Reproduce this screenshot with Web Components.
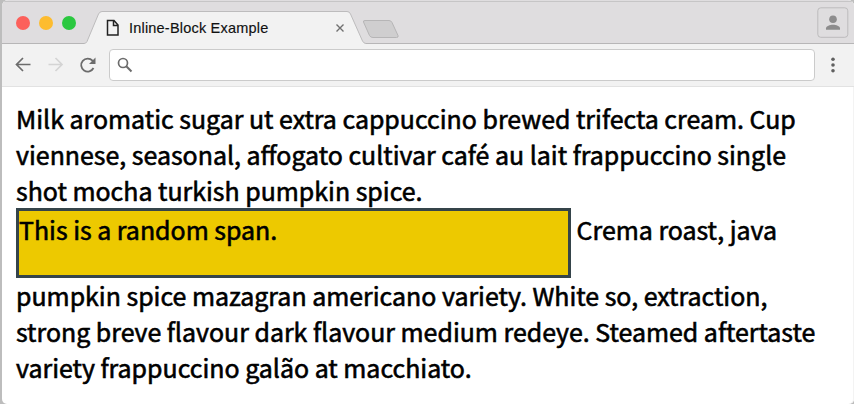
<!DOCTYPE html>
<html lang="en">
<head>
<meta charset="utf-8">
<title>Inline-Block Example</title>
<style>
body { margin: 0; background: #bdbdbd; overflow: hidden; }
</style>
</head>
<body>
<browser-window>
  <tab-strip slot="chrome"><browser-tab>Inline-Block Example</browser-tab></tab-strip>
  <tool-bar slot="chrome"></tool-bar>
  <page-text>Milk aromatic sugar ut extra cappuccino brewed trifecta cream. Cup<br>viennese, seasonal, affogato cultivar café au lait frappuccino single<br>shot mocha turkish pumpkin spice.<br><inline-box>This is a random span.</inline-box> Crema roast, java<br>pumpkin spice mazagran americano variety. White so, extraction,<br>strong breve flavour dark flavour medium redeye. Steamed aftertaste<br>variety frappuccino galão at macchiato.</page-text>
</browser-window>
<script>
function define(name, html) {
  customElements.define(name, class extends HTMLElement {
    constructor() {
      super();
      this.attachShadow({ mode: 'open' }).innerHTML = html;
    }
  });
}

define('browser-window', `
<style>
:host { display: flex; flex-direction: column; box-sizing: border-box; width: 854px; height: 404px; padding-left: 2px; }
.frame { flex: 1; display: flex; flex-direction: column; background: #fff; border-radius: 6px 6px 5px 5px; overflow: hidden; box-shadow: inset -1px 0 #f3f3f3; }
</style>
<div class="frame"><slot name="chrome"></slot><slot></slot></div>`);

define('tab-strip', `
<style>
:host { display: grid; grid-template-columns: 82px 290px 38px 1fr 31px; box-sizing: border-box; height: 44px; padding: 0 6px 0 0; background: #dfdddf linear-gradient(#c6c5c6, #c6c5c6) 0 1px / 100% 1px no-repeat; box-shadow: inset 0 -1px #b7b6b7; }
.lights { display: flex; gap: 9px; padding: 16px 0 0 14px; }
.lights i { width: 14px; height: 14px; border-radius: 50%; background: #fc605b; }
.lights i:nth-child(2) { background: #fdbc2f; }
.lights i:nth-child(3) { background: #2bc840; }
.new { margin: 19px 0 0 -14px; }
.profile { grid-column: 5; margin-top: 7px; }
svg { display: block; }
</style>
<div class="lights"><i></i><i></i><i></i></div>
<slot></slot>
<svg class="new" width="40" height="20" viewBox="0 0 40 20"><path d="M5 1.500H29Q31 1.500 32 3.500L38 16.500Q38.700 18.500 36.500 18.500H13Q10.500 18.500 9.500 16.500L3.500 3Q3 1.500 5 1.500Z" fill="#cfcecf" stroke="#b6b5b6"/></svg>
<svg class="profile" width="32" height="32" viewBox="0 0 32 32"><rect x=".8" y=".8" width="30" height="29.500" rx="3" fill="#dfdddf" stroke="#bcbbbc"/><circle cx="16" cy="12.300" r="3.800" fill="#8d8c8d"/><path d="M9 22.700V21.500C9 19 13 17.800 16 17.800S23 19 23 21.500V22.700Z" fill="#8d8c8d"/></svg>`);

define('browser-tab', `
<style>
:host { display: grid; grid-area: 1 / 2; width: 290px; height: 44px; font: 14.500px "Liberation Sans", Arial, sans-serif; letter-spacing: .2px; color: #111; }
.shape, .row { grid-area: 1 / 1; }
.row { display: flex; align-items: center; padding: 11px 0 0 22px; }
.doc { margin: 1px 9px 0 0; }
.close { margin: 1px 0 0 66px; }
.label { white-space: nowrap; width: 140px; -webkit-text-stroke: .15px; }
</style>
<svg class="shape" width="290" height="44" viewBox="0 0 290 44"><path d="M0 43.500Q2 43.500 3 41.500L14.500 14Q15.800 11.500 18 11.500H263Q265.500 11.500 266.500 14L278.500 41Q279.800 43.500 282 43.500V44H0Z" fill="#f2f2f2"/><path d="M0 43.500Q2 43.500 3 41.500L14.500 14Q15.800 11.500 18 11.500H263Q265.500 11.500 266.500 14L278.500 41Q279.800 43.500 282 43.500" fill="none" stroke="#bdbcbd"/></svg>
<div class="row">
<svg class="doc" width="14" height="18" viewBox="0 0 14 18"><path d="M1.500 1.500H8L12 6V16H1.500ZM7.500 1.500V6.500H12" fill="none" stroke="#222" stroke-width="1.500"/></svg>
<span class="label"><slot></slot></span>
<svg class="close" width="10" height="10" viewBox="0 0 10 10"><path d="M1.500 1.500L8.500 8.500M8.500 1.500L1.500 8.500" stroke="#707070" stroke-width="1.400"/></svg>
</div>`);

define('tool-bar', `
<style>
:host { display: flex; align-items: center; box-sizing: border-box; height: 43px; padding: 0 15px 0 12px; background: #f2f2f2; border-bottom: 1px solid #e2e2e2; }
svg { flex: none; display: block; }
.address { flex: none; box-sizing: border-box; width: 706px; height: 32px; margin: 0 14.500px 1px 8.500px; padding: 7px 0 0 7.500px; background: #fff; border: 1px solid #cbcbcb; border-radius: 4px; }
</style>
<svg width="86" height="20" viewBox="0 0 86 20" fill="none" stroke-width="1.700"><path d="M16.500 9.500H2.500M9 3L2.500 9.500L9 16" stroke="#6c6c6c"/><path d="M34.500 9.500H48M41.500 3L48 9.500L41.500 16" stroke="#d4d4d4"/><path d="M79.500 13A6.500 6.500 0 1 1 78.500 5.700L80 7.200" stroke="#6c6c6c" stroke-width="1.800"/><path d="M81.500 2.500V9H75Z" fill="#6c6c6c"/></svg>
<div class="address"><svg width="16" height="16" viewBox="0 0 16 16" fill="none" stroke="#6c6c6c" stroke-width="1.700"><circle cx="6" cy="6" r="4.500"/><path d="M9.300 9.300L14.500 14.500" stroke-width="2"/></svg></div>
<svg width="8" height="18" viewBox="0 0 8 18" fill="#606060"><circle cx="4" cy="3.300" r="1.800"/><circle cx="4" cy="9" r="1.800"/><circle cx="4" cy="14.700" r="1.800"/></svg>`);

define('page-text', `
<style>
:host { display: block; padding: 12.500px 0 0 14px; white-space: nowrap; font: 24.930px/36px "Noto Sans CJK SC", sans-serif; color: #000; -webkit-text-stroke: .6px #000; }
</style><slot></slot>`);

define('inline-box', `
<style>
:host { display: inline-block; box-sizing: border-box; width: 555px; height: 70px; margin-bottom: -.5px; border: 3px solid #35444a; background: #edc900; }
</style><slot></slot>`);
</script>
</body>
</html>
